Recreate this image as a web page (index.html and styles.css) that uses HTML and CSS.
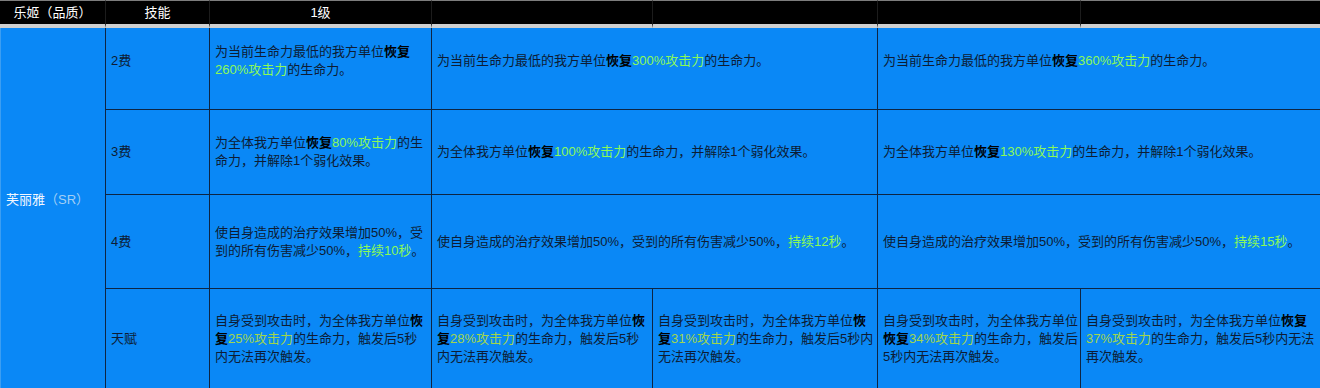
FILE: index.html
```html
<!DOCTYPE html>
<html lang="zh-CN">
<head>
<meta charset="utf-8">
<title>乐姬技能</title>
<link rel="stylesheet" href="styles.css">
</head>
<body>
<div class="sheet">
  <div class="hd hd-center hd-first">乐姬（品质）</div>
  <div class="hd hd-center">技能</div>
  <div class="hd hd-center">1级</div>
  <div class="hd"></div>
  <div class="hd"></div>
  <div class="hd"></div>
  <div class="hd"></div>

  <div class="name">芙丽雅<span class="q">（SR）</span></div>

  <div class="c r1">2费</div>
  <div class="c r1">为当前生命力最低的我方单位<b>恢复</b><br><span class="g">260%攻击力</span>的生命力。</div>
  <div class="c r1 span2">为当前生命力最低的我方单位<b>恢复</b><span class="g">300%攻击力</span>的生命力。</div>
  <div class="c r1 span2">为当前生命力最低的我方单位<b>恢复</b><span class="g">360%攻击力</span>的生命力。</div>

  <div class="c bt">3费</div>
  <div class="c bt">为全体我方单位<b>恢复</b><span class="g">80%攻击力</span>的生<br>命力，并解除1个弱化效果。</div>
  <div class="c bt span2">为全体我方单位<b>恢复</b><span class="g">100%攻击力</span>的生命力，并解除1个弱化效果。</div>
  <div class="c bt span2">为全体我方单位<b>恢复</b><span class="g">130%攻击力</span>的生命力，并解除1个弱化效果。</div>

  <div class="c bt">4费</div>
  <div class="c bt">使自身造成的治疗效果增加50%，受<br>到的所有伤害减少50%，<span class="g">持续10秒</span>。</div>
  <div class="c bt span2">使自身造成的治疗效果增加50%，受到的所有伤害减少50%，<span class="g">持续12秒</span>。</div>
  <div class="c bt span2">使自身造成的治疗效果增加50%，受到的所有伤害减少50%，<span class="g">持续15秒</span>。</div>

  <div class="c bt">天赋</div>
  <div class="c bt">自身受到攻击时，为全体我方单位<b>恢</b><br><b>复</b><span class="t">25%攻击力</span>的生命力，触发后5秒<br>内无法再次触发。</div>
  <div class="c bt">自身受到攻击时，为全体我方单位<b>恢</b><br><b>复</b><span class="t">28%攻击力</span>的生命力，触发后5秒<br>内无法再次触发。</div>
  <div class="c bt">自身受到攻击时，为全体我方单位<b>恢</b><br><b>复</b><span class="t">31%攻击力</span>的生命力，触发后5秒内<br>无法再次触发。</div>
  <div class="c bt">自身受到攻击时，为全体我方单位<br><b>恢复</b><span class="t">34%攻击力</span>的生命力，触发后<br>5秒内无法再次触发。</div>
  <div class="c bt">自身受到攻击时，为全体我方单位<b>恢复</b><br><span class="t">37%攻击力</span>的生命力，触发后5秒内无法<br>再次触发。</div>
</div>
</body>
</html>
```

FILE: styles.css
```css
html, body {
  margin: 0;
  padding: 0;
  background: #0a88f6;
  overflow: hidden;
}

.sheet {
  width: 1320px;
  height: 388px;
  display: grid;
  grid-template-columns: 105px 104px 222px 221px 225px 203px 240px;
  grid-template-rows: 28px 81px 85px 94px 100px;
  font-family: "Liberation Sans", "Noto Sans CJK SC", sans-serif;
  font-size: 13px;
  line-height: 18px;
  color: #0d1c34;
  background: #0a88f6;
  overflow: hidden;
  text-spacing-trim: space-all;
}

.hd {
  box-sizing: border-box;
  background: #000;
  color: #fff;
  border-top: 1px solid #7d7d7d;
  border-bottom: 4px solid #cfcfcf;
  border-left: 1px solid #1c1c1c;
  display: flex;
  align-items: center;
  white-space: nowrap;
}

.hd-first {
  border-left: none;
}

.hd-center {
  justify-content: center;
}

.name {
  grid-column: 1;
  grid-row: 2 / span 4;
  box-sizing: border-box;
  display: flex;
  align-items: center;
  padding: 0 0 16px 5px;
  color: #f2f7ff;
  border-left: 1px solid #3c9ef2;
  white-space: nowrap;
}

.name .q {
  color: #a3cff5;
}

.c {
  box-sizing: border-box;
  display: block;
  align-content: center;
  padding: 0 5px;
  border-left: 1px solid #0d2544;
  white-space: nowrap;
}

.r1 {
  padding-bottom: 16px;
}

.bt {
  border-top: 1px solid #0d2544;
}

.span2 {
  grid-column: span 2;
}

b {
  color: #000;
  font-weight: bold;
}

.g {
  color: #8cf957;
}

.t {
  color: #a2d64b;
}
```
